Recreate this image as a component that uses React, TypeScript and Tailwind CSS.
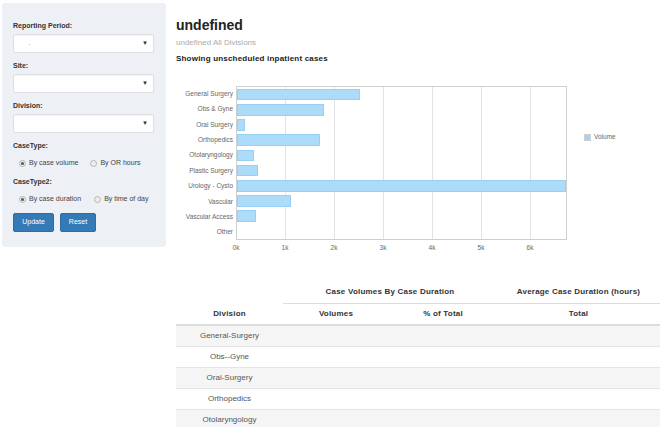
import React from "react";

type Bar = { name: string; value: number };

const bars: Bar[] = [
  { name: "General Surgery", value: 2510 },
  { name: "Obs & Gyne", value: 1780 },
  { name: "Oral Surgery", value: 170 },
  { name: "Orthopedics", value: 1690 },
  { name: "Otolaryngology", value: 350 },
  { name: "Plastic Surgery", value: 430 },
  { name: "Urology - Cysto", value: 7200 },
  { name: "Vascular", value: 1100 },
  { name: "Vascular Access", value: 390 },
  { name: "Other", value: 0 },
];

const rows = ["General-Surgery", "Obs--Gyne", "Oral-Surgery", "Orthopedics", "Otolaryngology"];

// plot: 331px wide, 49px per 1k
const PX_PER_K = 49;
const PLOT_W = 331;

const Select = ({ placeholder }: { placeholder?: boolean }) => (
  <div className="relative h-[19px] w-[141px] rounded-[2px] border border-[#dcdfe4] bg-white shadow-[inset_0_1px_1px_rgba(0,0,0,0.04)]">
    {placeholder && <span className="absolute left-[15px] top-[9px] h-[1px] w-[1px] bg-[#bbb]" />}
    <span className="absolute right-[5px] top-[5px] text-[6px] leading-[6px] text-[#333]">▼</span>
  </div>
);

const Radio = ({ label, checked }: { label: string; checked?: boolean }) => (
  <div className="flex items-center">
    <span className="flex h-[7px] w-[7px] items-center justify-center rounded-full border border-[#b5b5b5] bg-[#ececec]">
      {checked && <span className="h-[3px] w-[3px] rounded-full bg-[#555]" />}
    </span>
    <span className="ml-[3px] text-[7px] leading-[10px] text-[#444]">{label}</span>
  </div>
);

const Sidebar = () => (
  <aside className="ml-[2px] mt-[3px] h-[244px] w-[164px] shrink-0 rounded-[3px] bg-[#edf0f5] px-[11px] pt-[18px]">
    <div className="h-[9px] text-[7px] font-bold leading-[9px] text-[#333]">Reporting Period:</div>
    <div className="mt-[4px]">
      <Select placeholder />
    </div>
    <div className="mt-[8px] h-[9px] text-[7px] font-bold leading-[9px] text-[#333]">Site:</div>
    <div className="mt-[4px]">
      <Select />
    </div>
    <div className="mt-[8px] h-[9px] text-[7px] font-bold leading-[9px] text-[#333]">Division:</div>
    <div className="mt-[4px]">
      <Select />
    </div>
    <div className="mt-[8px] h-[9px] text-[7px] font-bold leading-[9px] text-[#333]">CaseType:</div>
    <div className="ml-[6px] mt-[8px] flex h-[10px] items-center gap-[12px]">
      <Radio label="By case volume" checked />
      <Radio label="By OR hours" />
    </div>
    <div className="mt-[9px] h-[9px] text-[7px] font-bold leading-[9px] text-[#333]">CaseType2:</div>
    <div className="ml-[6px] mt-[8px] flex h-[10px] items-center gap-[13px]">
      <Radio label="By case duration" checked />
      <Radio label="By time of day" />
    </div>
    <div className="mt-[9px] flex gap-[6px]">
      <button className="h-[19px] w-[41px] rounded-[2px] border border-[#2e6da4] bg-[#337ab7] text-[7px] text-white">
        Update
      </button>
      <button className="h-[19px] w-[36px] rounded-[2px] border border-[#2e6da4] bg-[#337ab7] text-[7px] text-white">
        Reset
      </button>
    </div>
  </aside>
);

const Chart = () => {
  const ticks = [0, 1, 2, 3, 4, 5, 6];
  return (
    <div className="mt-[22px] flex h-[168px]">
      <div className="flex h-[154px] w-[60px] flex-col pr-[3px]">
        {bars.map((b) => (
          <div key={b.name} className="flex h-[15.4px] items-center justify-end whitespace-nowrap text-[6.5px] text-[#666]">
            {b.name}
          </div>
        ))}
      </div>
      <div className="relative h-[154px] w-[331px] border border-[#cfcfcf]">
        {ticks.slice(1).map((t) => (
          <div
            key={t}
            className="absolute bottom-0 top-0 w-[1px] bg-[#e3e3e3]"
            style={{ left: t * PX_PER_K - 1 }}
          />
        ))}
        <div className="relative flex h-full flex-col overflow-hidden">
          {bars.map((b) => (
            <div key={b.name} className="flex h-[15.4px] items-center">
              {b.value > 0 && (
                <div
                  className="h-[11.5px] border border-[#98cff6] bg-[#acdcfa]"
                  style={{ width: Math.min((b.value / 1000) * PX_PER_K, PLOT_W) }}
                />
              )}
            </div>
          ))}
        </div>
        {ticks.map((t) => (
          <div
            key={t}
            className="absolute top-[157px] w-[20px] -translate-x-1/2 text-center text-[6.5px] leading-[8px] text-[#666]"
            style={{ left: t * PX_PER_K - 1 }}
          >
            {t}k
          </div>
        ))}
      </div>
      <div className="ml-[17px] mt-[47px] flex h-[8px] items-center">
        <span className="h-[7px] w-[7px] border border-[#cfcfcf] bg-[#9fd3f8]" />
        <span className="ml-[3px] text-[6.5px] text-[#666]">Volume</span>
      </div>
    </div>
  );
};

const DataTable = () => (
  <table className="mt-[27px] w-full table-fixed border-collapse text-[8px] text-[#333]">
    <colgroup>
      <col className="w-[107px]" />
      <col className="w-[106px]" />
      <col className="w-[108px]" />
      <col className="w-[163px]" />
    </colgroup>
    <thead>
      <tr className="h-[22px]">
        <th />
        <th colSpan={2} className="border-b border-[#dddddd] font-bold tracking-[0.2px]">
          Case Volumes By Case Duration
        </th>
        <th className="border-b border-[#dddddd] font-bold tracking-[0.2px]">Average Case Duration (hours)</th>
      </tr>
      <tr className="h-[22px] border-b-2 border-[#dddddd]">
        <th className="font-bold tracking-[0.2px]">Division</th>
        <th className="font-bold tracking-[0.2px]">Volumes</th>
        <th className="font-bold tracking-[0.2px]">% of Total</th>
        <th className="font-bold tracking-[0.2px]">Total</th>
      </tr>
    </thead>
    <tbody>
      {rows.map((r, i) => (
        <tr key={r} className={`h-[21px] border-t border-[#e4e4e4] ${i % 2 === 0 ? "bg-[#f5f5f5]" : "bg-white"}`}>
          <td className="text-center text-[#555]">{r}</td>
          <td />
          <td />
          <td />
        </tr>
      ))}
    </tbody>
  </table>
);

export default function App() {
  return (
    <div className="flex h-[427px] w-[660px] overflow-hidden bg-white font-['Liberation_Sans',Arial,sans-serif]">
      <Sidebar />
      <main className="ml-[10px] w-[484px] shrink-0 pt-[17px]">
        <h1 className="text-[14px] font-bold leading-[16px] text-[#222]">undefined</h1>
        <div className="mt-[5px] text-[8px] leading-[10px] text-[#aaa]">undefined All Divisions</div>
        <div className="mt-[6px] text-[8px] font-bold leading-[10px] tracking-[0.2px] text-[#222]">
          Showing unscheduled inpatient cases
        </div>
        <Chart />
        <DataTable />
      </main>
    </div>
  );
}
